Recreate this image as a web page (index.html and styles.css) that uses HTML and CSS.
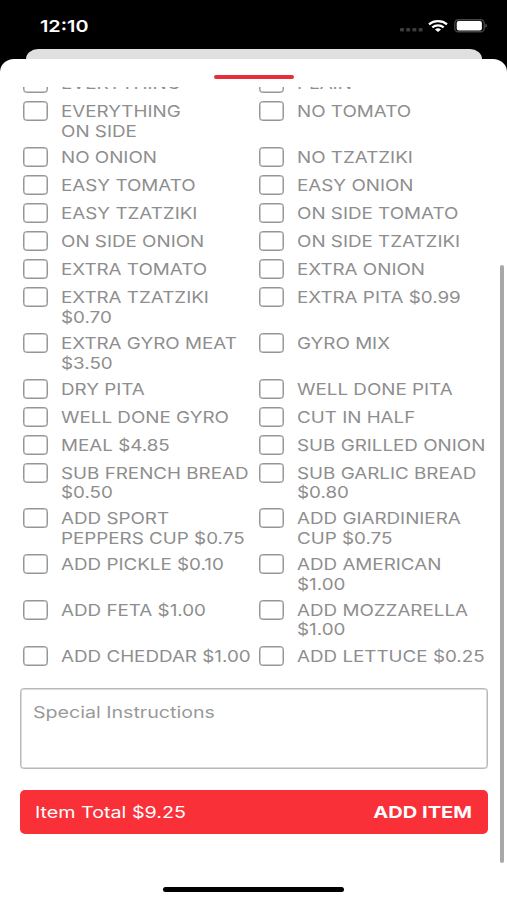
FILE: index.html
```html
<!DOCTYPE html>
<html lang="en">
<head>
    <meta charset="UTF-8">
    <meta name="viewport" content="width=device-width, initial-scale=1.0">
    <title>Add Item</title>
    <link rel="stylesheet" href="styles.css">
</head>
<body>

    <header class="status-bar">
        <span class="time">12:10</span>
        <div class="status-icons">
            <svg class="signal" width="23" height="4" viewBox="0 0 23 4" fill="#3c3c3c">
                <rect x="0" y="0" width="4" height="3.6" rx="1"/>
                <rect x="6.2" y="0" width="4" height="3.6" rx="1"/>
                <rect x="12.4" y="0" width="4" height="3.6" rx="1"/>
                <rect x="18.6" y="0" width="4" height="3.6" rx="1"/>
            </svg>
            <svg class="wifi" width="20" height="12" viewBox="0 0 20 12" fill="none" stroke="#fff" stroke-width="2.2">
                <path d="M1 4.3C6 .1 14 .1 19 4.3"/>
                <path d="M4.3 7.4C7.5 4.7 12.5 4.7 15.7 7.4"/>
                <path d="M7 9.4Q10 7.2 13 9.4L10 12Z" fill="#fff" stroke="none"/>
            </svg>
            <svg class="battery" width="34" height="14" viewBox="0 0 34 14">
                <rect x=".8" y=".8" width="29.4" height="12" rx="3.6" fill="none" stroke="#444" stroke-width="1.4"/>
                <rect x="2.7" y="2.1" width="25.2" height="9.4" rx="2" fill="#fff"/>
                <path d="M31.4 4.8Q33 5.4 33 6.8T31.4 8.8Z" fill="#555"/>
            </svg>
        </div>
    </header>

    <div class="back-card"></div>

    <main class="sheet">
        <div class="grabber"></div>

        <div class="scroll-area">
            <form id="itemForm">
                <div class="options">
                    <label class="option"><i class="box"></i><span>EVERYTHING</span></label>
                    <label class="option"><i class="box"></i><span>PLAIN</span></label>
                    <label class="option"><i class="box"></i><span>EVERYTHING<br>ON SIDE</span></label>
                    <label class="option"><i class="box"></i><span>NO TOMATO</span></label>
                    <label class="option"><i class="box"></i><span>NO ONION</span></label>
                    <label class="option"><i class="box"></i><span>NO TZATZIKI</span></label>
                    <label class="option"><i class="box"></i><span>EASY TOMATO</span></label>
                    <label class="option"><i class="box"></i><span>EASY ONION</span></label>
                    <label class="option"><i class="box"></i><span>EASY TZATZIKI</span></label>
                    <label class="option"><i class="box"></i><span>ON SIDE TOMATO</span></label>
                    <label class="option"><i class="box"></i><span>ON SIDE ONION</span></label>
                    <label class="option"><i class="box"></i><span>ON SIDE TZATZIKI</span></label>
                    <label class="option"><i class="box"></i><span>EXTRA TOMATO</span></label>
                    <label class="option"><i class="box"></i><span>EXTRA ONION</span></label>
                    <label class="option"><i class="box"></i><span>EXTRA TZATZIKI<br>$0.70</span></label>
                    <label class="option"><i class="box"></i><span>EXTRA PITA $0.99</span></label>
                    <label class="option"><i class="box"></i><span>EXTRA GYRO MEAT<br>$3.50</span></label>
                    <label class="option"><i class="box"></i><span>GYRO MIX</span></label>
                    <label class="option"><i class="box"></i><span>DRY PITA</span></label>
                    <label class="option"><i class="box"></i><span>WELL DONE PITA</span></label>
                    <label class="option"><i class="box"></i><span>WELL DONE GYRO</span></label>
                    <label class="option"><i class="box"></i><span>CUT IN HALF</span></label>
                    <label class="option"><i class="box"></i><span>MEAL $4.85</span></label>
                    <label class="option"><i class="box"></i><span>SUB GRILLED ONION</span></label>
                    <label class="option"><i class="box"></i><span>SUB FRENCH BREAD<br>$0.50</span></label>
                    <label class="option"><i class="box"></i><span>SUB GARLIC BREAD<br>$0.80</span></label>
                    <label class="option"><i class="box"></i><span>ADD SPORT<br>PEPPERS CUP $0.75</span></label>
                    <label class="option"><i class="box"></i><span>ADD GIARDINIERA<br>CUP $0.75</span></label>
                    <label class="option"><i class="box"></i><span>ADD PICKLE $0.10</span></label>
                    <label class="option"><i class="box"></i><span>ADD AMERICAN<br>$1.00</span></label>
                    <label class="option"><i class="box"></i><span>ADD FETA $1.00</span></label>
                    <label class="option"><i class="box"></i><span>ADD MOZZARELLA<br>$1.00</span></label>
                    <label class="option"><i class="box"></i><span>ADD CHEDDAR $1.00</span></label>
                    <label class="option"><i class="box"></i><span>ADD LETTUCE $0.25</span></label>
                </div>

                <div class="instructions"><span>Special Instructions</span></div>

                <button type="button" class="add-button">
                    <span class="total">Item Total $9.25</span>
                    <span class="add">ADD ITEM</span>
                </button>
            </form>
        </div>

        <div class="home-indicator"></div>
    </main>

    <div class="scrollbar"></div>

</body>
</html>
```
FILE: styles.css
```css
* {
    box-sizing: border-box;
}

body {
    font-family: Inter, "Liberation Sans", sans-serif;
    background: #000;
    margin: 0;
    height: 900px;
    overflow: hidden;
    position: relative;
    display: flex;
    flex-direction: column;
}

.status-bar {
    height: 49px;
    padding: 0 19px 0 40px;
    display: flex;
    justify-content: space-between;
    flex-shrink: 0;
}

.time {
    color: #fff;
    font-size: 16.5px;
    font-weight: 600;
    line-height: 20px;
    margin-top: 16px;
    transform: scaleX(1.2);
    transform-origin: left;
}

.status-icons {
    display: flex;
    align-items: flex-start;
}

.signal {
    margin: 28px 5px 0 0;
}

.wifi {
    margin: 20px 6px 0 0;
}

.battery {
    margin-top: 19px;
}

.back-card {
    height: 10px;
    margin: 0 25px 0 26px;
    background: #e0e0e0;
    border-radius: 12px 12px 0 0 / 10px 10px 0 0;
    flex-shrink: 0;
}

.sheet {
    flex: 1;
    background: #fff;
    border-radius: 14px 14px 0 0 / 13px 13px 0 0;
    display: flex;
    flex-direction: column;
    align-items: center;
}

.grabber {
    width: 80px;
    height: 4px;
    margin: 16px 0 8px;
    border-radius: 2px;
    background: #e5303a;
    flex-shrink: 0;
}

.scroll-area {
    width: 100%;
    height: 776px;
    overflow: hidden;
    flex-shrink: 0;
}

/* list is scrolled past its first row */
.options {
    display: grid;
    grid-template-columns: 236px 236px;
    margin: -13.7px 0 0 23px;
}

.option {
    display: flex;
    align-items: flex-start;
    gap: 13px;
    min-height: 28.06px;
    padding-bottom: 5.5px;
    color: #8e8e8e;
    font-size: 16px;
    line-height: 19.6px;
    white-space: nowrap;
}

.option span {
    display: block;
    margin-top: 1px;
    transform: scaleX(1.175);
    transform-origin: left;
}

.box {
    width: 25px;
    height: 20px;
    border: 1px solid #969696;
    border-radius: 3.5px;
    box-shadow: inset 0 0 0 .5px #969696;
    flex-shrink: 0;
}

.instructions {
    width: 468px;
    height: 81px;
    margin: 14.2px 0 0 20px;
    padding: 13px 12px;
    border: 1px solid #b8b8b8;
    border-radius: 3.5px;
    box-shadow: inset 0 0 0 .5px #b8b8b8;
    color: #999;
    font-size: 16px;
    line-height: 20px;
}

.instructions span {
    display: block;
    width: max-content;
    transform: scaleX(1.225);
    transform-origin: left;
}

.add-button {
    width: 468px;
    height: 44px;
    margin: 21px 0 0 20px;
    padding: 0 16px 0 15px;
    border: none;
    border-radius: 5px;
    background: #fa3038;
    color: #fff;
    font-family: inherit;
    font-size: 16px;
    display: flex;
    justify-content: space-between;
    align-items: center;
}

.total {
    transform: scaleX(1.23);
    transform-origin: left;
}

.add {
    font-weight: 700;
    font-size: 16.5px;
    transform: scaleX(1.22);
    transform-origin: right;
}

.home-indicator {
    width: 181px;
    height: 5px;
    margin-top: 24px;
    border-radius: 3px;
    background: #000;
    flex-shrink: 0;
}

.scrollbar {
    position: absolute;
    top: 265px;
    left: 500px;
    width: 4px;
    height: 598px;
    border-radius: 2px;
    background: #a8a8a8;
}
```
